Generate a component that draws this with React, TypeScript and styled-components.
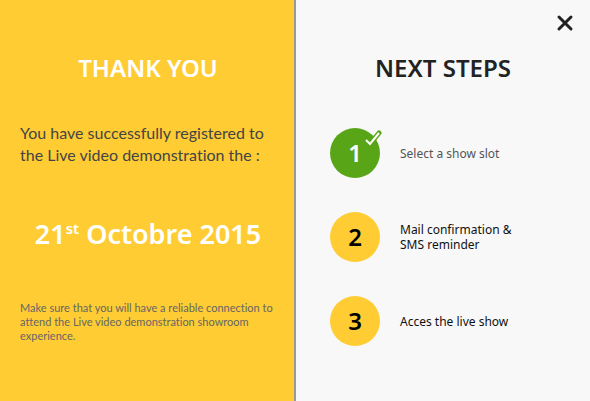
import React from "react";
import styled, { createGlobalStyle } from "styled-components";

const GlobalStyle = createGlobalStyle`
  *, *::before, *::after { box-sizing: border-box; }
  body { margin: 0; font-family: "Noto Sans", "Open Sans", sans-serif; }
`;

const Page = styled.main`
  position: relative;
  display: grid;
  grid-template-columns: 1fr 1fr;
  gap: 2px;
  min-height: 100vh;
  background: #999999;
`;

const Panel = styled.section<{ $tone: "yellow" | "light" }>`
  padding: ${(p) => (p.$tone === "yellow" ? "52px 18px 32px 20px" : "52px 34px 32px")};
  background: ${(p) => (p.$tone === "yellow" ? "#ffcc33" : "#f8f8f8")};
`;

const Title = styled.h2<{ $color: string }>`
  margin: 0;
  font-size: 24px;
  line-height: 32px;
  font-weight: 600;
  text-align: center;
  color: ${(p) => p.$color};
`;

const Lead = styled.p`
  margin: 38px 0 0;
  font-family: Lato, "Noto Sans", sans-serif;
  font-size: 16px;
  line-height: 22px;
  font-variant-ligatures: none;
  color: #444444;
`;

const EventDate = styled.p`
  margin: 48px 0 0;
  font-size: 27px;
  line-height: 40px;
  font-weight: 600;
  text-align: center;
  color: #ffffff;
`;

const Ordinal = styled.sup`
  font-size: 15px;
  line-height: 0;
`;

const Note = styled.p`
  margin: 47px 0 0;
  font-family: Lato, "Noto Sans", sans-serif;
  font-size: 11px;
  line-height: 14px;
  font-variant-ligatures: none;
  color: #666666;
`;

const Steps = styled.ol`
  display: grid;
  gap: 34px;
  margin: 44px 0 0;
  padding: 0;
  list-style: none;
`;

const Step = styled.li`
  display: flex;
  align-items: center;
  gap: 20px;
  font-size: 12px;
  line-height: 15px;
`;

const Badge = styled.span<{ $done?: boolean }>`
  position: relative;
  display: flex;
  flex: none;
  align-items: center;
  justify-content: center;
  width: 50px;
  height: 50px;
  padding-bottom: 2px;
  border-radius: 50%;
  font-size: 24px;
  font-weight: 600;
  color: ${(p) => (p.$done ? "#ffffff" : "#000000")};
  background: ${(p) => (p.$done ? "#58a618" : "#ffcc33")};
`;

const Tick = styled.svg`
  position: absolute;
  top: 0;
  right: -2px;
`;

const StepText = styled.span<{ $done?: boolean }>`
  color: ${(p) => (p.$done ? "#555555" : "#111111")};
`;

const StepLine = styled.span`
  display: block;
`;

const Close = styled.button`
  position: absolute;
  top: 12px;
  right: 14px;
  display: flex;
  padding: 2px;
  border: 0;
  background: none;
  cursor: pointer;
`;

const steps = [
  { lines: ["Select a show slot"], done: true },
  { lines: ["Mail confirmation &", "SMS reminder"] },
  { lines: ["Acces the live show"] },
];

export default function App() {
  return (
    <Page>
      <GlobalStyle />
      <Panel $tone="yellow">
        <Title $color="#ffffff">THANK YOU</Title>
        <Lead>You have successfully registered to the Live video demonstration the :</Lead>
        <EventDate>21<Ordinal>st</Ordinal> Octobre 2015</EventDate>
        <Note>Make sure that you will have a reliable connection to attend the Live video demonstration showroom experience.</Note>
      </Panel>
      <Panel $tone="light">
        <Title $color="#222222">NEXT STEPS</Title>
        <Steps>
          {steps.map((step, i) => (
            <Step key={i}>
              <Badge $done={step.done}>
                {i + 1}
                {step.done && (
                  <Tick width="20" height="20" viewBox="0 0 20 20" fill="none" strokeLinecap="round" strokeLinejoin="round" aria-hidden="true">
                    <path d="M4 12l4 4 9-11" stroke="#58a618" strokeWidth="5" />
                    <path d="M4 12l4 4 9-11" stroke="#ffffff" strokeWidth="2" strokeLinecap="butt" strokeLinejoin="miter" />
                  </Tick>
                )}
              </Badge>
              <StepText $done={step.done}>
                {step.lines.map((line) => (
                  <StepLine key={line}>{line}</StepLine>
                ))}
              </StepText>
            </Step>
          ))}
        </Steps>
      </Panel>
      <Close type="button" aria-label="Close">
        <svg width="18" height="18" viewBox="0 0 18 18" stroke="#222222" strokeWidth="3" strokeLinecap="round"><path d="M3 3l12 12M15 3L3 15" /></svg>
      </Close>
    </Page>
  );
}
